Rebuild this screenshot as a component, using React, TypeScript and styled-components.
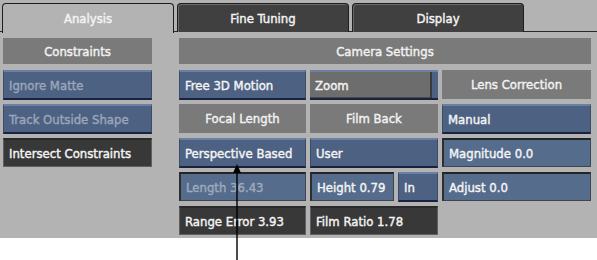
import React from "react";
import styled, { createGlobalStyle, css } from "styled-components";

const Global = createGlobalStyle`
  html, body { margin: 0; padding: 0; background: #ffffff; }
  body { font-family: "DejaVu Sans Condensed", "DejaVu Sans", sans-serif; }
`;

const Page = styled.div`
  position: relative;
  width: 597px;
  height: 260px;
  background: #ffffff;
  overflow: hidden;
`;

const Panel = styled.div`
  background: #b3b3b3;
  height: 238px;
  display: flex;
  flex-direction: column;
`;

const TabBar = styled.div`
  display: flex;
  align-items: flex-end;
  height: 32px;
  padding-left: 2px;
  gap: 3px;
  position: relative;
  &::after {
    content: "";
    position: absolute;
    left: 0;
    right: 0;
    bottom: 0;
    height: 1px;
    background: #2a2a2a;
  }
`;

const Tab = styled.div<{ $active?: boolean }>`
  position: relative;
  z-index: 1;
  width: 172px;
  box-sizing: border-box;
  border: 1px solid #1e1e1e;
  border-bottom: none;
  border-radius: 4px 4px 0 0;
  display: flex;
  align-items: center;
  justify-content: center;
  font-size: 13px;
  color: #f4f4f4;
  -webkit-text-stroke: 0.4px #f4f4f4;
  background: ${(p) => (p.$active ? "#b3b3b3" : "#404040")};
  ${(p) =>
    p.$active
      ? css`
          height: 30px;
          margin-bottom: -1px;
          padding-bottom: 1px;
        `
      : css`
          box-shadow: inset 1px 1px 0 #6a6a6a;
          height: 29px;
        `}
`;

const Body = styled.div`
  display: flex;
  padding: 6px 5px 0 3px;
  gap: 27px;
`;

const LeftCol = styled.div`
  width: 149px;
  display: grid;
  grid-template-rows: 28px repeat(3, 30px);
  row-gap: 4px;
  align-items: start;
`;

const RightGrid = styled.div`
  display: grid;
  grid-template-columns: 127px 128px 149px;
  grid-template-rows: 28px repeat(5, 30px);
  column-gap: 4px;
  row-gap: 4px;
  align-items: start;
`;

const Cell = styled.div<{ $span?: number }>`
  grid-column: span ${(p) => p.$span ?? 1};
  display: flex;
  min-width: 0;
  gap: 4px;
`;

const baseText = css`
  box-sizing: border-box;
  font-size: 13px;
  color: #f4f4f4;
  -webkit-text-stroke: 0.4px currentColor;
  display: flex;
  align-items: center;
  white-space: nowrap;
  overflow: hidden;
`;

const Header = styled.div<{ $h?: number }>`
  ${baseText};
  height: ${(p) => p.$h ?? 29}px;
  flex: 1;
  justify-content: center;
  background: #7a7a7a;
  color: #f2f2f2;
`;

const BlueButton = styled.div<{ $dim?: boolean; $w?: number }>`
  ${baseText};
  height: 30px;
  ${(p) => (p.$w ? `width: ${p.$w}px; flex: none;` : "flex: 1;")}
  padding-left: 5px;
  background: #4d6182;
  color: ${(p) => (p.$dim ? "#9aa6ba" : "#f4f4f4")};
  border-top: 2px solid #6b80a2;
  border-bottom: 2px solid #1b2240;
  border-left: 1px solid #3b4c6a;
  border-right: 1px solid #3b4c6a;
`;

const Field = styled.div<{ $dim?: boolean; $w?: number }>`
  ${baseText};
  height: 29px;
  ${(p) => (p.$w ? `width: ${p.$w}px; flex: none;` : "flex: 1;")}
  padding-left: 5px;
  background: #566c8c;
  color: ${(p) => (p.$dim ? "#9eaabd" : "#f4f4f4")};
  border: 1px solid #3e4450;
  border-top: 2px solid #242424;
  border-left: 2px solid #2e2e2e;
`;

const DarkField = styled.div`
  ${baseText};
  height: 29px;
  flex: 1;
  padding-left: 5px;
  background: #383838;
  border: 1px solid #606060;
  border-top: 2px solid #2a2a2a;
`;

const ZoomButton = styled.div`
  box-sizing: border-box;
  height: 30px;
  flex: 1;
  display: flex;
  background: #4d6182;
  border-bottom: 2px solid #1b2240;
  border-top: 2px solid #6b80a2;
  padding-right: 6px;
`;

const ZoomFace = styled.div`
  ${baseText};
  flex: 1;
  height: 100%;
  padding-left: 5px;
  background: #6d6d6d;
  border-right: 2px solid #3a3a3a;
  box-shadow: inset 0 -1px 0 #4a4a4a;
`;

const Arrow = styled.svg`
  position: absolute;
  left: 232px;
  top: 164px;
`;

export default function App() {
  return (
    <Page>
      <Global />
      <Panel>
        <TabBar>
          <Tab $active>Analysis</Tab>
          <Tab>Fine Tuning</Tab>
          <Tab>Display</Tab>
        </TabBar>
        <Body>
          <LeftCol>
            <Cell>
              <Header $h={26}>Constraints</Header>
            </Cell>
            <Cell>
              <BlueButton $dim>Ignore Matte</BlueButton>
            </Cell>
            <Cell>
              <BlueButton $dim>Track Outside Shape</BlueButton>
            </Cell>
            <Cell>
              <DarkField>Intersect Constraints</DarkField>
            </Cell>
          </LeftCol>
          <RightGrid>
            <Cell $span={3}>
              <Header $h={26}>Camera Settings</Header>
            </Cell>
            <Cell>
              <BlueButton>Free 3D Motion</BlueButton>
            </Cell>
            <Cell>
              <ZoomButton>
                <ZoomFace>Zoom</ZoomFace>
              </ZoomButton>
            </Cell>
            <Cell>
              <Header>Lens Correction</Header>
            </Cell>
            <Cell>
              <Header>Focal Length</Header>
            </Cell>
            <Cell>
              <Header>Film Back</Header>
            </Cell>
            <Cell>
              <BlueButton>Manual</BlueButton>
            </Cell>
            <Cell>
              <BlueButton>Perspective Based</BlueButton>
            </Cell>
            <Cell>
              <BlueButton>User</BlueButton>
            </Cell>
            <Cell>
              <Field>Magnitude 0.0</Field>
            </Cell>
            <Cell>
              <Field $dim>Length 36.43</Field>
            </Cell>
            <Cell>
              <Field>Height 0.79</Field>
              <BlueButton $w={40}>In</BlueButton>
            </Cell>
            <Cell>
              <Field>Adjust 0.0</Field>
            </Cell>
            <Cell>
              <DarkField>Range Error 3.93</DarkField>
            </Cell>
            <Cell>
              <DarkField>Film Ratio 1.78</DarkField>
            </Cell>
          </RightGrid>
        </Body>
      </Panel>
      <Arrow width="10" height="96" viewBox="0 0 10 96">
        <line x1="5" y1="4" x2="5" y2="96" stroke="#000" strokeWidth="1.4" />
        <polygon points="5,0 1,9 9,9" fill="#000" />
      </Arrow>
    </Page>
  );
}
